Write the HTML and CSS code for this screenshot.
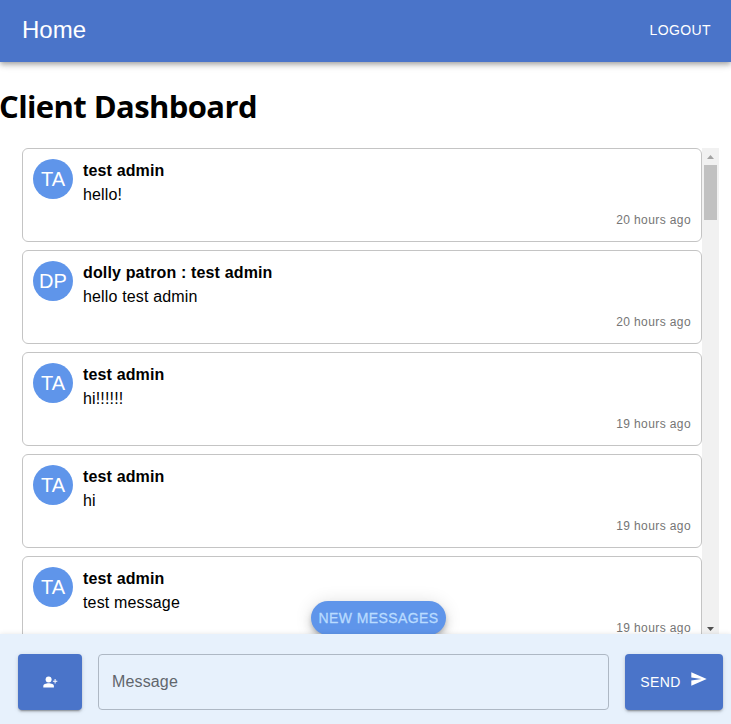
FILE: index.html
```html
<!DOCTYPE html>
<html lang="en">
<head>
<meta charset="utf-8">
<title>Client Dashboard</title>
<link rel="stylesheet" href="styles.css">
</head>
<body>
<div class="app">
  <header class="app-bar">
    <a class="brand">Home</a>
    <a class="logout">LOGOUT</a>
  </header>
  <h1 class="title">Client Dashboard</h1>
  <main class="feed">
    <div class="messages">
      <article class="card"><div class="avatar">TA</div><div class="body"><div class="name">test admin</div><div class="text">hello!</div><div class="time">20 hours ago</div></div></article>
      <article class="card"><div class="avatar">DP</div><div class="body"><div class="name">dolly patron : test admin</div><div class="text">hello test admin</div><div class="time">20 hours ago</div></div></article>
      <article class="card"><div class="avatar">TA</div><div class="body"><div class="name">test admin</div><div class="text">hi!!!!!!</div><div class="time">19 hours ago</div></div></article>
      <article class="card"><div class="avatar">TA</div><div class="body"><div class="name">test admin</div><div class="text">hi</div><div class="time">19 hours ago</div></div></article>
      <article class="card"><div class="avatar">TA</div><div class="body"><div class="name">test admin</div><div class="text">test message</div><div class="time">19 hours ago</div></div></article>
    </div>
    <div class="scrollbar">
      <svg class="arrow-up" width="7" height="4" viewBox="0 0 7 4"><path d="M0 4L3.5 0L7 4Z"/></svg>
      <div class="thumb"></div>
      <svg class="arrow-down" width="7" height="4" viewBox="0 0 7 4"><path d="M0 0L3.5 4L7 0Z"/></svg>
    </div>
    <button class="new-messages">NEW MESSAGES</button>
  </main>
  <footer class="composer">
    <button class="btn add" aria-label="Add person">
      <svg width="15" height="13" viewBox="0 0 15 13"><circle cx="5.600" cy="3.500" r="3"/><path d="M.3 11.400V10C.3 8.200 3 7.300 5.600 7.300S10.900 8.200 10.900 10v1.400Z"/><path d="M11.600 3.100h1v1.600h1.700v1h-1.700v1.700h-1V5.700H9.900v-1h1.700Z"/></svg>
    </button>
    <div class="field">Message</div>
    <button class="btn send">SEND
      <svg width="16" height="14" viewBox="0 0 16 14"><path d="M.3.3L15.700 7L.3 13.700V8.500L10.500 7L.3 5.500Z"/></svg>
    </button>
  </footer>
</div>
</body>
</html>
```
FILE: styles.css
```css
* { box-sizing: border-box; }
body { margin: 0; background: #fff; color: #000; font-family: "Liberation Sans", Arial, sans-serif; }
button { border: 0; margin: 0; font-family: inherit; }
.app { height: 724px; display: flex; flex-direction: column; overflow: hidden; }
.app-bar {
  height: 62px; flex: none; display: flex; justify-content: space-between; align-items: center;
  padding: 0 20px 2px 22px; background: #4a74c9; color: #fff;
  box-shadow: 0 2px 4px -1px rgba(0,0,0,.2), 0 4px 5px rgba(0,0,0,.14), 0 1px 10px rgba(0,0,0,.12);
}
.brand { font-size: 24px; line-height: 32px; }
.logout { font-size: 14px; letter-spacing: .4px; }
.title {
  margin: 22px 0 20px -1px; flex: none; height: 44px; line-height: 44px;
  font-family: "Open Sans", "Noto Sans", sans-serif; font-size: 31px; font-weight: 700; letter-spacing: -.6px; white-space: nowrap;
}
.feed { position: relative; flex: none; height: 486px; margin: 0 12px 0 22px; display: flex; overflow: visible; }
.messages { width: 680px; height: 486px; overflow: hidden; display: flex; flex-direction: column; gap: 8px; }
.card { height: 94px; flex: none; border: 1px solid #c4c4c4; border-radius: 6px; padding: 10px; display: flex; gap: 10px; }
.avatar { width: 40px; height: 40px; flex: none; border-radius: 50%; background: #5f95ea; color: #fff; font-size: 20px; line-height: 40px; text-align: center; }
.body { flex: 1; font-size: 16px; line-height: 24px; letter-spacing: .15px; }
.name { font-weight: 700; }
.time { margin-top: 3px; line-height: 20px; font-size: 12px; letter-spacing: .4px; text-align: right; color: #757575; }
.scrollbar { width: 17px; background: #f1f1f1; display: flex; flex-direction: column; align-items: center; padding: 7px 0 3px; }
.arrow-up { fill: #a3a3a3; }
.thumb { width: 13px; height: 55px; margin-top: 6px; background: #c1c1c1; }
.arrow-down { margin-top: auto; fill: #505050; }
.new-messages {
  position: absolute; left: 289px; top: 453px; width: 135px; height: 34px; padding: 0;
  border-radius: 17px; background: #5f95ea; color: #b9dbff; font-size: 14px; -webkit-text-stroke: .3px #b9dbff; letter-spacing: .4px; white-space: nowrap;
  box-shadow: 0 3px 5px -1px rgba(0,0,0,.2), 0 6px 10px rgba(0,0,0,.14), 0 1px 18px rgba(0,0,0,.12);
}
.composer {
  position: relative; z-index: 1; flex: none; height: 90px; background: #e7f1fc; display: flex; gap: 16px; padding: 20px 8px 14px 18px;
  box-shadow: 0 0 5px rgba(0,0,0,.1);
}
.btn {
  height: 56px; flex: none; border-radius: 4px; background: #4a74c9; color: #fff; padding: 0;
  display: flex; align-items: center; justify-content: center; font-size: 14px; letter-spacing: .4px;
  box-shadow: 0 3px 1px -2px rgba(0,0,0,.2), 0 2px 2px rgba(0,0,0,.14), 0 1px 5px rgba(0,0,0,.12);
}
.btn svg { fill: #fff; }
.add { width: 64px; }
.send { width: 98px; gap: 10px; padding-right: 1px; }
.send svg { margin-bottom: 6px; }
.field { flex: 1; height: 56px; border: 1px solid #aeb8c4; border-radius: 4px; padding: 0 13px; font-size: 16px; line-height: 54px; color: #61666c; letter-spacing: .15px; }
```
